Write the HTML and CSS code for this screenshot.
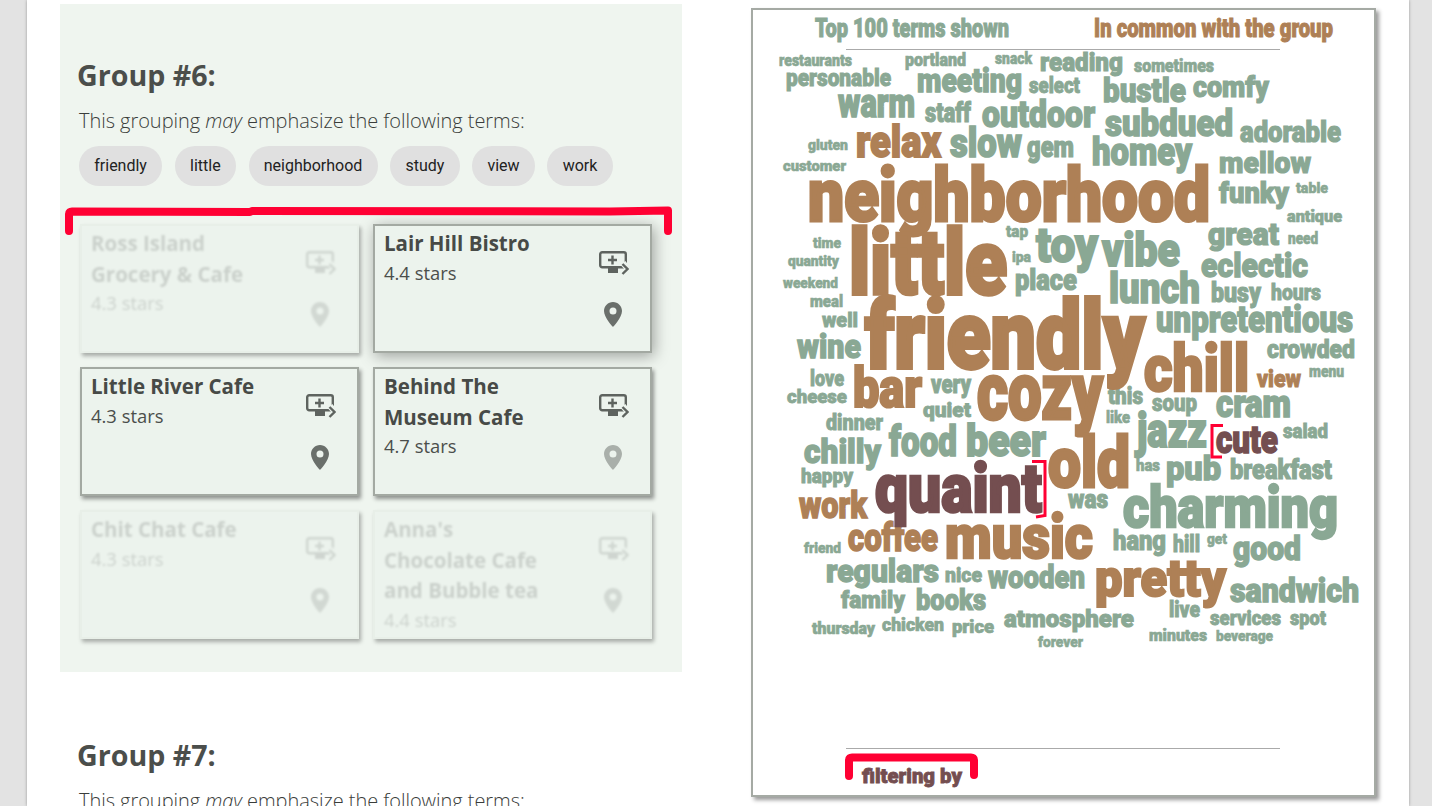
FILE: index.html
```html
<!DOCTYPE html>
<html lang="en">
<head>
<meta charset="utf-8">
<title>Groups</title>
<link rel="stylesheet" href="styles.css">
</head>
<body>
<svg class="defs" width="0" height="0" aria-hidden="true">
  <symbol id="i-add" viewBox="0 0 30 25">
    <rect x="1.200" y="1.200" width="25.600" height="15" rx="2" fill="none" stroke="currentColor" stroke-width="2.400"/>
    <rect x="9" y="16" width="10" height="6" fill="currentColor"/>
    <path d="M13.500 4.500v9M9 9h9" fill="none" stroke="currentColor" stroke-width="2.400"/>
    <path d="M24 12l5 6-5 6" fill="none" stroke="#ecf3ed" stroke-width="6"/>
    <path d="M23.500 13l5 5-5 5" fill="none" stroke="currentColor" stroke-width="2.400"/>
  </symbol>
  <symbol id="i-pin" viewBox="0 0 18 25">
    <path fill-rule="evenodd" fill="currentColor" d="M9 0C4 0 0 4 0 9c0 6.500 9 16 9 16s9-9.500 9-16c0-5-4-9-9-9zm0 5.500a3.500 3.500 0 1 1 0 7 3.500 3.500 0 0 1 0-7z"/>
  </symbol>
</svg>
<main class="sheet">
  <section class="left">
    <div class="group group-active">
      <h2 class="group-title">Group #6:</h2>
      <p class="group-lead">This grouping <em>may</em> emphasize the following terms:</p>
      <div class="chips">
        <span class="chip">friendly</span><span class="chip">little</span><span class="chip">neighborhood</span><span class="chip">study</span><span class="chip">view</span><span class="chip">work</span>
      </div>
      <div class="cards">
        <article class="card faded">
          <div class="card-body"><h3 class="card-name">Ross Island Grocery &amp; Cafe</h3><p class="card-stars">4.3 stars</p></div>
          <div class="card-actions"><svg class="ic-add"><use href="#i-add"/></svg><svg class="ic-pin"><use href="#i-pin"/></svg></div>
        </article>
        <article class="card lifted">
          <div class="card-body"><h3 class="card-name">Lair Hill Bistro</h3><p class="card-stars">4.4 stars</p></div>
          <div class="card-actions"><svg class="ic-add"><use href="#i-add"/></svg><svg class="ic-pin"><use href="#i-pin"/></svg></div>
        </article>
        <article class="card">
          <div class="card-body"><h3 class="card-name">Little River Cafe</h3><p class="card-stars">4.3 stars</p></div>
          <div class="card-actions"><svg class="ic-add"><use href="#i-add"/></svg><svg class="ic-pin"><use href="#i-pin"/></svg></div>
        </article>
        <article class="card">
          <div class="card-body"><h3 class="card-name">Behind The Museum Cafe</h3><p class="card-stars">4.7 stars</p></div>
          <div class="card-actions"><svg class="ic-add"><use href="#i-add"/></svg><svg class="ic-pin pale"><use href="#i-pin"/></svg></div>
        </article>
        <article class="card faded">
          <div class="card-body"><h3 class="card-name">Chit Chat Cafe</h3><p class="card-stars">4.3 stars</p></div>
          <div class="card-actions"><svg class="ic-add"><use href="#i-add"/></svg><svg class="ic-pin"><use href="#i-pin"/></svg></div>
        </article>
        <article class="card faded">
          <div class="card-body"><h3 class="card-name">Anna's Chocolate Cafe and Bubble tea</h3><p class="card-stars">4.4 stars</p></div>
          <div class="card-actions"><svg class="ic-add"><use href="#i-add"/></svg><svg class="ic-pin"><use href="#i-pin"/></svg></div>
        </article>
      </div>
      <svg class="mark-cards" width="622" height="40" viewBox="60 204 622 40"><path class="mark thick" d="M69 231V214Q69 211.500 72 211.500L250 212 252 211 610 211.500 668 210.500V231"/></svg>
    </div>
    <div class="group">
      <h2 class="group-title">Group #7:</h2>
      <p class="group-lead">This grouping <em>may</em> emphasize the following terms:</p>
    </div>
  </section>
  <aside class="cloud-card">
    <svg class="cloud" width="621" height="785" viewBox="753 10 621 785">
      <g class="w-green">
        <text x="815" y="37" font-size="25" textLength="194" lengthAdjust="spacingAndGlyphs">Top 100 terms shown</text>
        <text x="779" y="66" font-size="16" textLength="73" lengthAdjust="spacingAndGlyphs">restaurants</text>
        <text x="905" y="66" font-size="18" textLength="61" lengthAdjust="spacingAndGlyphs">portland</text>
        <text x="995" y="64" font-size="16" textLength="37" lengthAdjust="spacingAndGlyphs">snack</text>
        <text x="1040" y="71" font-size="26" textLength="83" lengthAdjust="spacingAndGlyphs">reading</text>
        <text x="1134" y="72" font-size="18" textLength="80" lengthAdjust="spacingAndGlyphs">sometimes</text>
        <text x="786" y="86" font-size="23" textLength="105" lengthAdjust="spacingAndGlyphs">personable</text>
        <text x="917" y="92" font-size="33" textLength="105" lengthAdjust="spacingAndGlyphs">meeting</text>
        <text x="1029" y="93" font-size="22" textLength="51" lengthAdjust="spacingAndGlyphs">select</text>
        <text x="1103" y="102" font-size="33" textLength="83" lengthAdjust="spacingAndGlyphs">bustle</text>
        <text x="1193" y="97" font-size="30" textLength="76" lengthAdjust="spacingAndGlyphs">comfy</text>
        <text x="838" y="117" font-size="40" textLength="77" lengthAdjust="spacingAndGlyphs">warm</text>
        <text x="925" y="122" font-size="27" textLength="46" lengthAdjust="spacingAndGlyphs">staff</text>
        <text x="982" y="127" font-size="37" textLength="113" lengthAdjust="spacingAndGlyphs">outdoor</text>
        <text x="1105" y="136" font-size="37" textLength="128" lengthAdjust="spacingAndGlyphs">subdued</text>
        <text x="1240" y="142" font-size="30" textLength="101" lengthAdjust="spacingAndGlyphs">adorable</text>
        <text x="950" y="157" font-size="40" textLength="72" lengthAdjust="spacingAndGlyphs">slow</text>
        <text x="1027" y="157" font-size="30" textLength="47" lengthAdjust="spacingAndGlyphs">gem</text>
        <text x="1092" y="165" font-size="38" textLength="100" lengthAdjust="spacingAndGlyphs">homey</text>
        <text x="1219" y="173" font-size="30" textLength="92" lengthAdjust="spacingAndGlyphs">mellow</text>
        <text x="808" y="150" font-size="15" textLength="40" lengthAdjust="spacingAndGlyphs">gluten</text>
        <text x="783" y="171" font-size="15" textLength="63" lengthAdjust="spacingAndGlyphs">customer</text>
        <text x="1219" y="203" font-size="30" textLength="70" lengthAdjust="spacingAndGlyphs">funky</text>
        <text x="1296" y="193" font-size="15" textLength="32" lengthAdjust="spacingAndGlyphs">table</text>
        <text x="1287" y="222" font-size="17" textLength="55" lengthAdjust="spacingAndGlyphs">antique</text>
        <text x="1208" y="245" font-size="31" textLength="71" lengthAdjust="spacingAndGlyphs">great</text>
        <text x="1288" y="244" font-size="16" textLength="30" lengthAdjust="spacingAndGlyphs">need</text>
        <text x="813" y="248" font-size="15" textLength="28" lengthAdjust="spacingAndGlyphs">time</text>
        <text x="788" y="266" font-size="15" textLength="51" lengthAdjust="spacingAndGlyphs">quantity</text>
        <text x="783" y="288" font-size="15" textLength="55" lengthAdjust="spacingAndGlyphs">weekend</text>
        <text x="810" y="307" font-size="16" textLength="33" lengthAdjust="spacingAndGlyphs">meal</text>
        <text x="822" y="327" font-size="20" textLength="36" lengthAdjust="spacingAndGlyphs">well</text>
        <text x="797" y="358" font-size="34" textLength="64" lengthAdjust="spacingAndGlyphs">wine</text>
        <text x="810" y="386" font-size="22" textLength="34" lengthAdjust="spacingAndGlyphs">love</text>
        <text x="787" y="403" font-size="19" textLength="60" lengthAdjust="spacingAndGlyphs">cheese</text>
        <text x="826" y="430" font-size="22" textLength="57" lengthAdjust="spacingAndGlyphs">dinner</text>
        <text x="1006" y="237" font-size="17" textLength="22" lengthAdjust="spacingAndGlyphs">tap</text>
        <text x="1012" y="262" font-size="15" textLength="19" lengthAdjust="spacingAndGlyphs">ipa</text>
        <text x="1036" y="262" font-size="48" textLength="62" lengthAdjust="spacingAndGlyphs">toy</text>
        <text x="1102" y="266" font-size="46" textLength="78" lengthAdjust="spacingAndGlyphs">vibe</text>
        <text x="1015" y="290" font-size="30" textLength="62" lengthAdjust="spacingAndGlyphs">place</text>
        <text x="1109" y="303" font-size="43" textLength="91" lengthAdjust="spacingAndGlyphs">lunch</text>
        <text x="1201" y="277" font-size="34" textLength="107" lengthAdjust="spacingAndGlyphs">eclectic</text>
        <text x="1211" y="302" font-size="27" textLength="50" lengthAdjust="spacingAndGlyphs">busy</text>
        <text x="1271" y="300" font-size="22" textLength="50" lengthAdjust="spacingAndGlyphs">hours</text>
        <text x="1156" y="332" font-size="36" textLength="197" lengthAdjust="spacingAndGlyphs">unpretentious</text>
        <text x="1267" y="358" font-size="26" textLength="88" lengthAdjust="spacingAndGlyphs">crowded</text>
        <text x="931" y="393" font-size="26" textLength="40" lengthAdjust="spacingAndGlyphs">very</text>
        <text x="923" y="417" font-size="21" textLength="48" lengthAdjust="spacingAndGlyphs">quiet</text>
        <text x="1309" y="377" font-size="17" textLength="35" lengthAdjust="spacingAndGlyphs">menu</text>
        <text x="1108" y="404" font-size="24" textLength="35" lengthAdjust="spacingAndGlyphs">this</text>
        <text x="1152" y="411" font-size="23" textLength="45" lengthAdjust="spacingAndGlyphs">soup</text>
        <text x="1216" y="417" font-size="38" textLength="75" lengthAdjust="spacingAndGlyphs">cram</text>
        <text x="1106" y="423" font-size="17" textLength="24" lengthAdjust="spacingAndGlyphs">like</text>
        <text x="1137" y="447" font-size="48" textLength="70" lengthAdjust="spacingAndGlyphs">jazz</text>
        <text x="1283" y="438" font-size="20" textLength="45" lengthAdjust="spacingAndGlyphs">salad</text>
        <text x="1136" y="471" font-size="17" textLength="24" lengthAdjust="spacingAndGlyphs">has</text>
        <text x="1166" y="480" font-size="34" textLength="55" lengthAdjust="spacingAndGlyphs">pub</text>
        <text x="1230" y="479" font-size="27" textLength="102" lengthAdjust="spacingAndGlyphs">breakfast</text>
        <text x="804" y="463" font-size="34" textLength="77" lengthAdjust="spacingAndGlyphs">chilly</text>
        <text x="889" y="456" font-size="42" textLength="68" lengthAdjust="spacingAndGlyphs">food</text>
        <text x="966" y="456" font-size="44" textLength="80" lengthAdjust="spacingAndGlyphs">beer</text>
        <text x="801" y="483" font-size="20" textLength="52" lengthAdjust="spacingAndGlyphs">happy</text>
        <text x="1068" y="508" font-size="26" textLength="40" lengthAdjust="spacingAndGlyphs">was</text>
        <text x="1123" y="527" font-size="58" textLength="215" lengthAdjust="spacingAndGlyphs">charming</text>
        <text x="804" y="553" font-size="15" textLength="37" lengthAdjust="spacingAndGlyphs">friend</text>
        <text x="1113" y="550" font-size="27" textLength="53" lengthAdjust="spacingAndGlyphs">hang</text>
        <text x="1173" y="552" font-size="24" textLength="27" lengthAdjust="spacingAndGlyphs">hill</text>
        <text x="1207" y="544" font-size="14" textLength="20" lengthAdjust="spacingAndGlyphs">get</text>
        <text x="1233" y="560" font-size="34" textLength="68" lengthAdjust="spacingAndGlyphs">good</text>
        <text x="826" y="582" font-size="32" textLength="113" lengthAdjust="spacingAndGlyphs">regulars</text>
        <text x="945" y="582" font-size="20" textLength="37" lengthAdjust="spacingAndGlyphs">nice</text>
        <text x="988" y="588" font-size="32" textLength="97" lengthAdjust="spacingAndGlyphs">wooden</text>
        <text x="1230" y="602" font-size="34" textLength="129" lengthAdjust="spacingAndGlyphs">sandwich</text>
        <text x="841" y="608" font-size="23" textLength="64" lengthAdjust="spacingAndGlyphs">family</text>
        <text x="916" y="610" font-size="30" textLength="70" lengthAdjust="spacingAndGlyphs">books</text>
        <text x="1004" y="627" font-size="24" textLength="130" lengthAdjust="spacingAndGlyphs">atmosphere</text>
        <text x="1169" y="617" font-size="22" textLength="31" lengthAdjust="spacingAndGlyphs">live</text>
        <text x="1210" y="625" font-size="20" textLength="71" lengthAdjust="spacingAndGlyphs">services</text>
        <text x="1290" y="625" font-size="20" textLength="36" lengthAdjust="spacingAndGlyphs">spot</text>
        <text x="812" y="634" font-size="16" textLength="63" lengthAdjust="spacingAndGlyphs">thursday</text>
        <text x="882" y="631" font-size="18" textLength="62" lengthAdjust="spacingAndGlyphs">chicken</text>
        <text x="952" y="633" font-size="18" textLength="42" lengthAdjust="spacingAndGlyphs">price</text>
        <text x="1149" y="641" font-size="17" textLength="58" lengthAdjust="spacingAndGlyphs">minutes</text>
        <text x="1216" y="641" font-size="14" textLength="57" lengthAdjust="spacingAndGlyphs">beverage</text>
        <text x="1038" y="647" font-size="15" textLength="45" lengthAdjust="spacingAndGlyphs">forever</text>
      </g>
      <g class="w-brown">
        <text x="1094" y="37" font-size="25" textLength="239" lengthAdjust="spacingAndGlyphs">In common with the group</text>
        <text x="856" y="157" font-size="44" textLength="85" lengthAdjust="spacingAndGlyphs">relax</text>
        <text x="808" y="221" font-size="75" textLength="402" lengthAdjust="spacingAndGlyphs">neighborhood</text>
        <text x="849" y="294" font-size="90" textLength="158" lengthAdjust="spacingAndGlyphs">little</text>
        <text x="865" y="368" font-size="94" textLength="280" lengthAdjust="spacingAndGlyphs">friendly</text>
        <text x="853" y="407" font-size="55" textLength="69" lengthAdjust="spacingAndGlyphs">bar</text>
        <text x="977" y="419" font-size="80" textLength="126" lengthAdjust="spacingAndGlyphs">cozy</text>
        <text x="1144" y="391" font-size="64" textLength="105" lengthAdjust="spacingAndGlyphs">chill</text>
        <text x="1257" y="387" font-size="24" textLength="44" lengthAdjust="spacingAndGlyphs">view</text>
        <text x="1048" y="487" font-size="71" textLength="82" lengthAdjust="spacingAndGlyphs">old</text>
        <text x="799" y="518" font-size="36" textLength="68" lengthAdjust="spacingAndGlyphs">work</text>
        <text x="848" y="551" font-size="38" textLength="90" lengthAdjust="spacingAndGlyphs">coffee</text>
        <text x="945" y="558" font-size="62" textLength="148" lengthAdjust="spacingAndGlyphs">music</text>
        <text x="1095" y="596" font-size="52" textLength="131" lengthAdjust="spacingAndGlyphs">pretty</text>
      </g>
      <g class="w-dark">
        <text x="1216" y="453" font-size="38" textLength="62" lengthAdjust="spacingAndGlyphs">cute</text>
        <text x="875" y="512" font-size="68" textLength="167" lengthAdjust="spacingAndGlyphs">quaint</text>
        <text x="862" y="783" font-size="21" textLength="100" lengthAdjust="spacingAndGlyphs">filtering by</text>
      </g>
      <path class="rule" d="M846 49.500H1280M846 748.500H1280"/>
      <path class="mark thin" d="M1032 461.500H1045V515.500L1036 517"/>
      <path class="mark thin" d="M1223 425.500H1212V457H1222"/>
      <path class="mark thick" d="M849 776V760Q849 757.500 852 757.500H971Q974 757.500 974 760V775"/>
    </svg>
  </aside>
</main>
</body>
</html>
```

FILE: styles.css
```css
* { box-sizing: border-box; }
html, body { margin: 0; height: 806px; overflow: hidden; }
body { background: #e3e3e3; font-family: "Open Sans", sans-serif; color: #4b4e4b; }
.defs { position: absolute; }
.sheet {
  width: 1382px; height: 806px; margin-left: 27px; background: #fff;
  box-shadow: 0 0 3px #999;
  display: flex; align-items: flex-start;
  padding: 4px 0 0 33px; overflow: hidden;
}
.left { width: 622px; flex: none; margin-right: 69px; }
.group { padding: 54px 16px 0 17px; }
.group-active { position: relative; background: #eff5ef; height: 668px; margin-bottom: 0; }
.group-title { margin: 0; font-size: 28.600px; line-height: 34px; font-weight: 700; color: #4b4e4b; }
.group-lead { margin: 15px 0 0 2px; font-size: 20px; line-height: 28px; font-weight: 300; letter-spacing: -.045px; color: #3a3d3a; }
.group-lead em { font-style: italic; }
.chips { display: flex; gap: 12.600px; margin: 11px 0 0 2px; }
.chip {
  height: 40px; padding: 0 15.250px; border-radius: 20px; background: #e0e0e0;
  font-family: Roboto, sans-serif; font-size: 16px; line-height: 40px; color: #222;
}
.cards {
  display: grid; grid-template-columns: 279px 279px; grid-auto-rows: 129px;
  column-gap: 14px; row-gap: 14px; margin: 38px 0 0 3px;
}
.card {
  display: flex; background: #ecf3ed; border: 2px solid #a3a9a2;
  box-shadow: 2px 3px 4px rgba(0, 0, 0, .4);
  padding: 0 0 0 9px;
}
.card.lifted { box-shadow: 2px 3px 14px rgba(0, 0, 0, .35); }
.card.faded { border-color: rgba(163, 169, 162, .05); box-shadow: 2px 3px 4px rgba(0, 0, 0, .3); }
.card.faded > * { opacity: .2; filter: blur(1px); }
.card-body { flex: 1; min-width: 0; }
.card-name { margin: 2px 0 0; font-size: 20.500px; line-height: 30.500px; font-weight: 700; color: #474a47; max-width: 170px; }
.card-stars { margin: 0; font-size: 18.400px; line-height: 28px; font-weight: 400; color: #4b4e4b; }
.card-actions { flex: none; width: 51px; padding: 25px 0 0 0; display: flex; flex-direction: column; align-items: flex-start; }
.ic-add { width: 30px; height: 25px; color: #5e635f; }
.ic-pin { width: 18px; height: 25px; margin: 26px 0 0 5px; color: #6a6f6b; }
.ic-pin.pale { color: #a9afaa; }
.mark-cards { position: absolute; left: 0; top: 200px; overflow: visible; }
.group-active + .group { background: #fff; padding-top: 66px; }
.cloud-card {
  flex: none; width: 625px; height: 789px; margin-top: 4px;
  border: 2px solid #a5aaa4; background: #fff;
  box-shadow: 3px 3px 4px rgba(0, 0, 0, .4);
}
.cloud { display: block; }
.cloud text { font-family: Roboto, "Liberation Sans", Arial, sans-serif; font-weight: 900; stroke-width: .04em; }
.w-green { fill: #8aa894; stroke: #8aa894; }
.w-brown { fill: #ae8056; stroke: #ae8056; }
.w-dark { fill: #744e50; stroke: #744e50; }
.rule { stroke: #aaa; stroke-width: 1; fill: none; }
.mark { fill: none; stroke: #ff0033; stroke-linecap: round; stroke-linejoin: round; }
.mark.thick { stroke-width: 8; }
.mark.thin { stroke-width: 3; stroke-linecap: butt; stroke-linejoin: miter; }
```
